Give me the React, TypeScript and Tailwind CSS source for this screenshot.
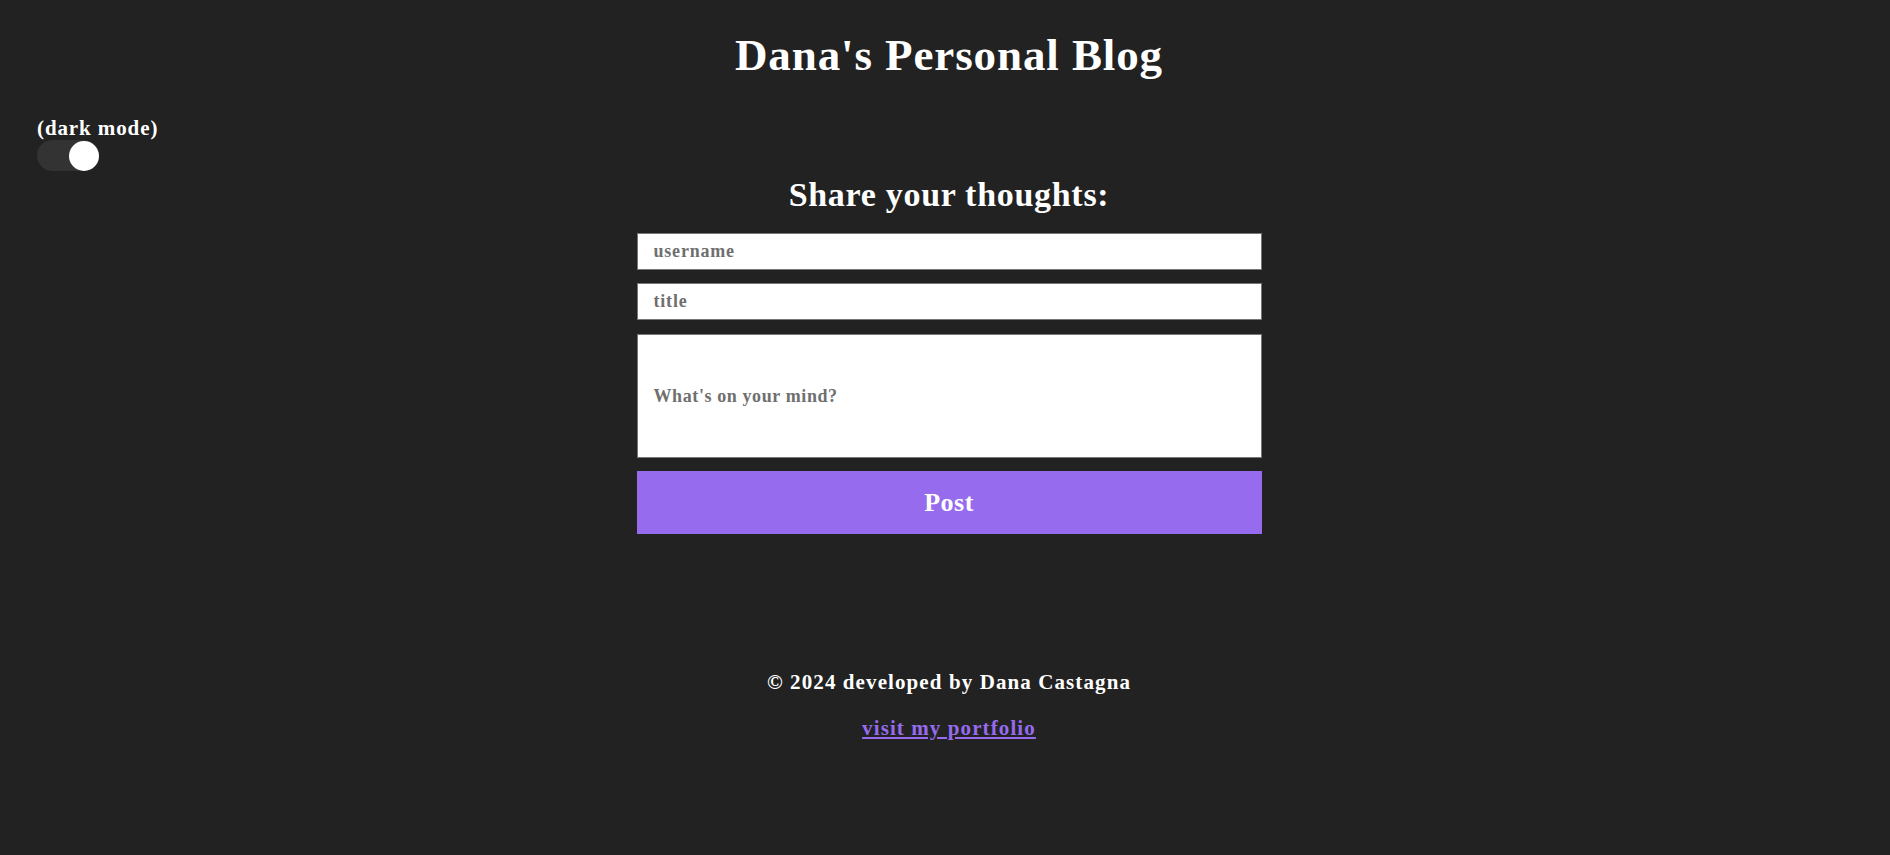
import React from "react";

export default function App() {
  return (
    <div
      className="min-h-screen w-full bg-[#222222] text-white"
      style={{ fontFamily: '"Liberation Serif", "DejaVu Serif", serif' }}
    >
      <h1 className="pt-[29px] pl-2 text-center text-[45px] font-bold leading-[52px] tracking-[0.9px]">
        Dana's Personal Blog
      </h1>

      <div className="mt-[35px] pl-[37px]">
        <div className="text-[21px] font-bold leading-[24px] tracking-[0.9px]">(dark mode)</div>
        <div className="relative h-[31px] w-[62px] rounded-full bg-[#333333]">
          <div className="absolute right-0 top-[1px] h-[30px] w-[30px] rounded-full bg-white" />
        </div>
      </div>

      <div className="flex flex-col items-center pl-2">
        <h2 className="mt-[4px] text-[34px] font-bold leading-[40px] tracking-[0.7px]">Share your thoughts:</h2>
        <form className="mt-[18px] flex w-[625px] flex-col gap-[13px]">
          <input
            className="h-[37px] w-full border border-[#767676] bg-white px-4 text-[18px] font-bold tracking-[0.8px] text-black outline-none placeholder:text-[#6f6f6f]"
            placeholder="username"
            style={{ fontFamily: '"Liberation Serif", serif' }}
          />
          <input
            className="h-[37px] w-full border border-[#767676] bg-white px-4 text-[18px] font-bold tracking-[0.8px] text-black outline-none placeholder:text-[#6f6f6f]"
            placeholder="title"
            style={{ fontFamily: '"Liberation Serif", serif' }}
          />
          <textarea
            className="mt-[1px] h-[124px] w-full resize-none border border-[#767676] bg-white px-4 pt-[50px] text-[18px] font-bold leading-[22px] tracking-[0.6px] text-black outline-none placeholder:text-[#6f6f6f]"
            placeholder="What's on your mind?"
            style={{ fontFamily: '"Liberation Serif", serif' }}
          />
          <button
            type="button"
            className="h-[63px] w-full bg-[#966bed] text-[26px] font-bold tracking-[0.5px] text-white"
          >
            Post
          </button>
        </form>

        <p className="mt-[136px] text-[21px] font-bold leading-[24px] tracking-[1.1px]">© 2024 developed by Dana Castagna</p>
        <a href="#" className="mt-[22px] text-[21px] font-bold leading-[24px] tracking-[1.1px] text-[#966bed] underline">
          visit my portfolio
        </a>
      </div>
    </div>
  );
}
